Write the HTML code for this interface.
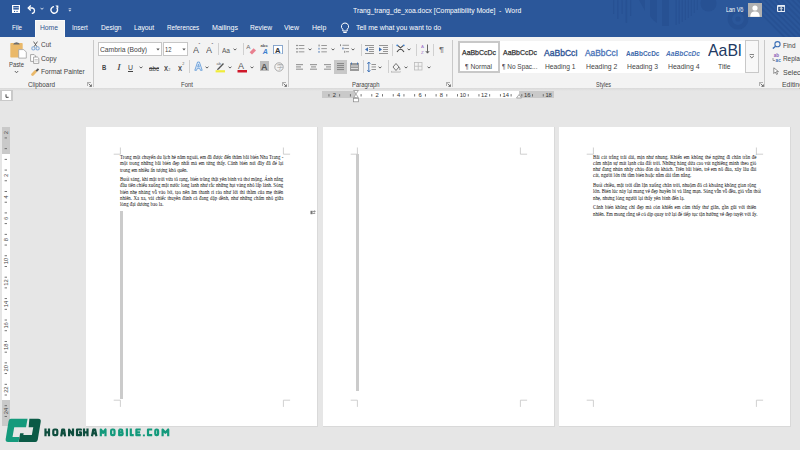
<!DOCTYPE html>
<html><head><meta charset="utf-8"><style>
html,body{margin:0;padding:0;}
body{width:800px;height:450px;overflow:hidden;position:relative;background:#e6e6e6;font-family:"Liberation Sans",sans-serif;}
.r{position:absolute;display:block;}
.t{position:absolute;white-space:pre;line-height:1;transform-origin:0 50%;}
.dl{position:absolute;font-family:"Liberation Serif",serif;font-size:5.2px;line-height:1;color:#161616;text-align:justify;text-align-last:justify;white-space:nowrap;transform-origin:0 0;transform:scaleX(0.93);-webkit-text-stroke:0.03px #161616;}
</style></head><body>
<div class="r" style="left:0.00px;top:0.00px;width:800.00px;height:37.00px;background:#2b579a;"></div><div class="r" style="left:0.00px;top:37.00px;width:800.00px;height:51.00px;background:#f3f3f3;"></div><div class="r" style="left:0.00px;top:88.00px;width:800.00px;height:362.00px;background:#e6e6e6;"></div><div class="r" style="left:0.00px;top:88.00px;width:800.00px;height:2.50px;background:linear-gradient(#d9d9d9,#e6e6e6);"></div><svg class="r" style="left:600.00px;top:0.00px" width="200" height="37" viewBox="0 0 200 37"><rect x="13" y="0" width="1.3" height="14" rx="0.6" fill="#275193"/><rect x="17.2" y="0" width="1.3" height="19" rx="0.6" fill="#275193"/><rect x="21.5" y="0" width="1.2" height="14" rx="0.6" fill="#275193"/><rect x="25.6" y="0" width="1.5" height="23" rx="0.6" fill="#275193"/><rect x="30" y="0" width="1.3" height="16" rx="0.6" fill="#275193"/><rect x="75.5" y="0" width="1.3" height="25" rx="0.6" fill="#275193"/><rect x="78.6" y="0" width="1.3" height="24" rx="0.6" fill="#275193"/><rect x="81.7" y="0" width="1.2" height="22" rx="0.6" fill="#275193"/><rect x="84.8" y="0" width="1.2" height="20" rx="0.6" fill="#275193"/><rect x="87.8" y="0" width="1.1" height="18" rx="0.6" fill="#275193"/><rect x="90.8" y="0" width="1" height="16" rx="0.6" fill="#275193"/><rect x="93.8" y="0" width="1" height="13" rx="0.6" fill="#275193"/><rect x="96.8" y="0" width="1" height="10" rx="0.6" fill="#275193"/><path d="M39 0 H45 L45 11 Z" fill="#275193"/><path d="M50 0 H57 V23 Q53 21 50 16 Z" fill="#275193"/><path d="M62 0 H69 V26 H62 Z" fill="#275193"/><circle cx="108.5" cy="3.5" r="8" fill="#275193"/><circle cx="138" cy="19" r="8.2" fill="none" stroke="#275193" stroke-width="4.5"/><circle cx="138" cy="19" r="2.6" fill="#275193"/><clipPath id="stc"><path d="M157 0 H200 V37 H170 Z"/></clipPath><g clip-path="url(#stc)"><path d="M146.2 0 L148.6 0 L185.6 37 L183.2 37 Z" fill="#275193"/><path d="M151.8 0 L154.2 0 L191.2 37 L188.8 37 Z" fill="#275193"/><path d="M157.4 0 L159.8 0 L196.8 37 L194.4 37 Z" fill="#275193"/><path d="M163 0 L165.4 0 L202.4 37 L200 37 Z" fill="#275193"/><path d="M168.6 0 L171 0 L208 37 L205.6 37 Z" fill="#275193"/><path d="M174.2 0 L176.6 0 L213.6 37 L211.2 37 Z" fill="#275193"/><path d="M179.8 0 L182.2 0 L219.2 37 L216.8 37 Z" fill="#275193"/><path d="M185.4 0 L187.8 0 L224.8 37 L222.4 37 Z" fill="#275193"/><path d="M191 0 L193.4 0 L230.4 37 L228 37 Z" fill="#275193"/><path d="M196.6 0 L199 0 L236 37 L233.6 37 Z" fill="#275193"/><path d="M202.2 0 L204.6 0 L241.6 37 L239.2 37 Z" fill="#275193"/></g></svg><div class="t" style="left:352.50px;top:7.60px;font-size:6.80px;color:#fff;font-family:'Liberation Sans', sans-serif;font-weight:normal;font-style:normal;transform:scaleX(0.9981);">Trang_trang_de_xoa.docx [Compatibility Mode]  -  Word</div><div class="t" style="left:725.60px;top:5.79px;font-size:7.00px;color:#fff;font-family:'Liberation Sans', sans-serif;font-weight:normal;font-style:normal;transform:scaleX(0.7843);">Lan Võ</div><div class="r" style="left:748.00px;top:2.50px;width:14.00px;height:14.00px;background:#b1b1b1;"></div><svg class="r" style="left:748.00px;top:2.50px" width="14" height="14" viewBox="0 0 14 14"><circle cx="7" cy="5" r="2.6" fill="#fff"/><path d="M2.3 13.7 C2.3 9.5 4.5 8.4 7 8.4 C9.5 8.4 11.7 9.5 11.7 13.7 Z" fill="#fff"/></svg><svg class="r" style="left:776.90px;top:4.90px" width="8.4" height="7.1" viewBox="0 0 8.4 7.1"><rect x="0.6" y="0.6" width="7.2" height="5.9" rx="0.8" fill="#2b4f86" stroke="#e8eef7" stroke-width="1.2"/><rect x="0.6" y="0.6" width="7.2" height="1.2" fill="#e8eef7"/><path d="M4.2 6 V2.6 M2.9 3.8 L4.2 2.5 L5.5 3.8" stroke="#fff" stroke-width="0.9" fill="none"/></svg><svg class="r" style="left:12.00px;top:5.00px" width="8" height="8" viewBox="0 0 8 8"><rect x="0" y="0" width="8" height="8" fill="#fff"/><rect x="1.3" y="1" width="5.5" height="3.6" fill="#2b579a"/><rect x="1.3" y="2.5" width="5.5" height="0.6" fill="#fff"/><rect x="2" y="5.9" width="1.1" height="1.1" fill="#2b579a"/><rect x="4.5" y="5.9" width="1.1" height="1.1" fill="#2b579a"/></svg><svg class="r" style="left:27.00px;top:5.00px" width="10" height="9" viewBox="0 0 10 9"><path d="M2.2 3 H5.5 A2.8 2.8 0 0 1 5.5 8.4 H4.8" fill="none" stroke="#fff" stroke-width="1.3"/><path d="M3.8 0.6 L1.2 3 L3.8 5.4" fill="none" stroke="#fff" stroke-width="1.3"/></svg><svg class="r" style="left:39.50px;top:7.00px" width="4" height="3.5" viewBox="0 0 4 3.5"><path d="M0.6 0.8 L2 2.4 L3.4 0.8" fill="none" stroke="#fff" stroke-width="0.8"/></svg><svg class="r" style="left:49.50px;top:4.50px" width="9" height="9" viewBox="0 0 9 9"><path d="M6.6 2.6 A3.3 3.3 0 1 1 4 1.6" fill="none" stroke="#fff" stroke-width="1.4"/><path d="M5.3 0.6 L8.3 0.6 L8.3 3.6 Z" fill="#fff"/></svg><svg class="r" style="left:67.50px;top:7.50px" width="4" height="4" viewBox="0 0 4 4"><rect x="0.6" y="0.5" width="2.6" height="0.7" fill="#fff"/><path d="M0.5 2.2 H3.3 L1.9 3.6 Z" fill="#fff"/></svg><div class="r" style="left:34.50px;top:19.50px;width:30.50px;height:17.50px;background:#f3f3f3;box-shadow:inset 1px 1px 0 #fbfbfb,inset -1px 0 0 #fbfbfb;"></div><div class="t" style="left:11.50px;top:25.40px;font-size:6.80px;color:#fff;font-family:'Liberation Sans', sans-serif;font-weight:normal;font-style:normal;transform:scaleX(0.9126);">File</div><div class="t" style="left:40.00px;top:25.40px;font-size:6.80px;color:#34568f;font-family:'Liberation Sans', sans-serif;font-weight:normal;font-style:normal;transform:scaleX(0.9923);">Home</div><div class="t" style="left:71.75px;top:25.40px;font-size:6.80px;color:#fff;font-family:'Liberation Sans', sans-serif;font-weight:normal;font-style:normal;transform:scaleX(0.9261);">Insert</div><div class="t" style="left:100.50px;top:25.40px;font-size:6.80px;color:#fff;font-family:'Liberation Sans', sans-serif;font-weight:normal;font-style:normal;transform:scaleX(0.9685);">Design</div><div class="t" style="left:133.75px;top:25.40px;font-size:6.80px;color:#fff;font-family:'Liberation Sans', sans-serif;font-weight:normal;font-style:normal;transform:scaleX(0.9918);">Layout</div><div class="t" style="left:166.75px;top:25.40px;font-size:6.80px;color:#fff;font-family:'Liberation Sans', sans-serif;font-weight:normal;font-style:normal;transform:scaleX(0.9274);">References</div><div class="t" style="left:212.00px;top:25.40px;font-size:6.80px;color:#fff;font-family:'Liberation Sans', sans-serif;font-weight:normal;font-style:normal;transform:scaleX(1.0424);">Mailings</div><div class="t" style="left:250.00px;top:25.40px;font-size:6.80px;color:#fff;font-family:'Liberation Sans', sans-serif;font-weight:normal;font-style:normal;transform:scaleX(0.9867);">Review</div><div class="t" style="left:284.00px;top:25.40px;font-size:6.80px;color:#fff;font-family:'Liberation Sans', sans-serif;font-weight:normal;font-style:normal;transform:scaleX(1.0263);">View</div><div class="t" style="left:311.75px;top:25.40px;font-size:6.80px;color:#fff;font-family:'Liberation Sans', sans-serif;font-weight:normal;font-style:normal;transform:scaleX(1.0189);">Help</div><svg class="r" style="left:340.00px;top:22.00px" width="10" height="12" viewBox="0 0 10 12"><path d="M5 1 A3.5 3.5 0 0 0 2.8 7.3 V9 H7.2 V7.3 A3.5 3.5 0 0 0 5 1 Z" fill="none" stroke="#fff" stroke-width="1"/><path d="M3.3 10.5 H6.7" stroke="#fff" stroke-width="1"/></svg><div class="t" style="left:356.00px;top:25.40px;font-size:6.80px;color:#fff;font-family:'Liberation Sans', sans-serif;font-weight:normal;font-style:normal;transform:scaleX(1.0160);">Tell me what you want to do</div><div class="r" style="left:92.80px;top:39.50px;width:0.90px;height:47.00px;background:#c9c9c9;"></div><div class="r" style="left:287.80px;top:39.50px;width:0.90px;height:47.00px;background:#c9c9c9;"></div><div class="r" style="left:451.80px;top:39.50px;width:0.90px;height:47.00px;background:#c9c9c9;"></div><div class="r" style="left:764.30px;top:39.50px;width:0.90px;height:47.00px;background:#c9c9c9;"></div><svg class="r" style="left:9.50px;top:40.50px" width="17" height="18" viewBox="0 0 17 18"><rect x="0.3" y="1.9" width="12.4" height="14.7" rx="0.8" fill="#eab96a"/><path d="M3.2 3.6 Q3.5 1.4 6.5 1.2 Q9.5 1.4 9.8 3.6 Z" fill="#6e6e6e"/><path d="M8.7 8.6 H13.8 L16.3 11.1 V17.1 H8.7 Z" fill="#fff" stroke="#a0a0a0" stroke-width="0.8"/></svg><div class="t" style="left:9.00px;top:60.68px;font-size:7.40px;color:#444;font-family:'Liberation Sans', sans-serif;font-weight:normal;font-style:normal;transform:scaleX(0.7927);">Paste</div><svg class="r" style="left:14.00px;top:70.00px" width="5" height="4" viewBox="0 0 5 4"><path d="M0.8 1 L2.5 2.8 L4.2 1" fill="none" stroke="#555" stroke-width="0.9"/></svg><svg class="r" style="left:30.50px;top:40.50px" width="9" height="10" viewBox="0 0 9 10"><path d="M2.6 0.6 L6 5.8 M6.4 0.6 L3 5.8" stroke="#555" stroke-width="0.9"/><circle cx="2.4" cy="7.4" r="1.6" fill="none" stroke="#86acd8" stroke-width="1.1"/><circle cx="6.6" cy="7.4" r="1.6" fill="none" stroke="#86acd8" stroke-width="1.1"/></svg><div class="t" style="left:40.60px;top:41.18px;font-size:7.40px;color:#444;font-family:'Liberation Sans', sans-serif;font-weight:normal;font-style:normal;transform:scaleX(0.8684);">Cut</div><svg class="r" style="left:29.80px;top:53.50px" width="10" height="10" viewBox="0 0 10 10"><path d="M0.6 0.6 H4.2 L5.6 2 V7.4 H0.6 Z" fill="#fff" stroke="#8c8c8c" stroke-width="0.75"/><path d="M3.6 3 H7.4 L8.8 4.4 V9.4 H3.6 Z" fill="#fff" stroke="#8c8c8c" stroke-width="0.75"/><path d="M4.6 5.5 H7.8 M4.6 7 H7.8" stroke="#aaa" stroke-width="0.6"/></svg><div class="t" style="left:40.60px;top:55.28px;font-size:7.40px;color:#444;font-family:'Liberation Sans', sans-serif;font-weight:normal;font-style:normal;transform:scaleX(0.9059);">Copy</div><svg class="r" style="left:31.00px;top:66.50px" width="9" height="9" viewBox="0 0 9 9"><path d="M1.6 7.4 L4.4 4.6" stroke="#eab96a" stroke-width="2.8" stroke-linecap="round"/><path d="M4.6 3.4 L6.8 1.2 L8.2 2.6 L6 4.8 Z" fill="#555"/></svg><div class="t" style="left:40.60px;top:67.98px;font-size:7.40px;color:#444;font-family:'Liberation Sans', sans-serif;font-weight:normal;font-style:normal;transform:scaleX(0.8950);">Format Painter</div><div class="t" style="left:28.00px;top:81.60px;font-size:6.80px;color:#444;font-family:'Liberation Sans', sans-serif;font-weight:normal;font-style:normal;transform:scaleX(0.9276);">Clipboard</div><svg class="r" style="left:87.30px;top:82.40px" width="5" height="5" viewBox="0 0 5 5"><path d="M0.4 0.4 H4 M0.4 0.4 V4" stroke="#888" stroke-width="0.7" fill="none"/><path d="M1.6 1.6 L4.4 4.4 M4.4 2.4 V4.4 H2.4" stroke="#555" stroke-width="0.8" fill="none"/></svg><div class="r" style="left:98.00px;top:42.30px;width:63.60px;height:13.30px;background:#fff;box-shadow:inset 0 0 0 1px #c6c6c6;"></div><div class="r" style="left:163.00px;top:42.30px;width:24.75px;height:13.30px;background:#fff;box-shadow:inset 0 0 0 1px #c6c6c6;"></div><div class="t" style="left:99.75px;top:46.08px;font-size:7.40px;color:#444;font-family:'Liberation Sans', sans-serif;font-weight:normal;font-style:normal;transform:scaleX(0.9100);">Cambria (Body)</div><div class="t" style="left:165.00px;top:46.08px;font-size:7.40px;color:#444;font-family:'Liberation Sans', sans-serif;font-weight:normal;font-style:normal;transform:scaleX(0.7897);">12</div><svg class="r" style="left:156.00px;top:48.00px" width="4" height="3" viewBox="0 0 4 3"><path d="M0.3 0.5 L2 2.5 L3.7 0.5 Z" fill="#555"/></svg><svg class="r" style="left:181.75px;top:48.00px" width="4" height="3" viewBox="0 0 4 3"><path d="M0.3 0.5 L2 2.5 L3.7 0.5 Z" fill="#555"/></svg><div class="t" style="left:193.00px;top:45.99px;font-size:8.50px;color:#555;font-family:'Liberation Sans', sans-serif;font-weight:normal;font-style:normal;transform:scaleX(1.0583);">A</div><div class="t" style="left:198.50px;top:42.85px;font-size:5.00px;color:#555;font-family:'Liberation Sans', sans-serif;font-weight:normal;font-style:normal;">ˆ</div><div class="t" style="left:206.00px;top:45.99px;font-size:8.50px;color:#555;font-family:'Liberation Sans', sans-serif;font-weight:normal;font-style:normal;transform:scaleX(1.0583);">A</div><div class="t" style="left:211.50px;top:42.85px;font-size:5.00px;color:#555;font-family:'Liberation Sans', sans-serif;font-weight:normal;font-style:normal;">ˇ</div><div class="r" style="left:217.75px;top:43.00px;width:0.80px;height:12.00px;background:#d0d0d0;"></div><div class="t" style="left:222.00px;top:46.79px;font-size:7.00px;color:#555;font-family:'Liberation Sans', sans-serif;font-weight:normal;font-style:normal;transform:scaleX(0.9344);">Aa</div><svg class="r" style="left:233.00px;top:47.50px" width="4" height="3" viewBox="0 0 4 3"><path d="M0.5 0.6 L2 2.1 L3.5 0.6" fill="none" stroke="#555" stroke-width="0.95"/></svg><div class="r" style="left:242.50px;top:43.00px;width:0.80px;height:12.00px;background:#d0d0d0;"></div><svg class="r" style="left:246.00px;top:43.00px" width="11" height="12" viewBox="0 0 11 12"><text x="0.3" y="6.3" font-size="6.2" fill="#666" font-family="Liberation Sans">A</text><path d="M3.6 9.2 L7.6 5.2 L10 7.6 L6 11.6 Z" fill="#e8808f"/></svg><svg class="r" style="left:260.00px;top:43.00px" width="9" height="12" viewBox="0 0 9 12"><text x="0.5" y="4.3" font-size="4.2" fill="#555" font-family="Liberation Sans" font-weight="bold">abc</text><text x="2.8" y="11" font-size="7" fill="#3b7fcf" font-family="Liberation Sans" font-style="italic" font-weight="bold">A</text></svg><svg class="r" style="left:273.00px;top:44.50px" width="10" height="9.5" viewBox="0 0 10 9.5"><rect x="0.5" y="0.5" width="9" height="8.5" fill="#fff" stroke="#7f9fc8" stroke-width="0.9"/><text x="1.9" y="7.6" font-size="7.6" fill="#333" font-family="Liberation Sans" font-weight="bold">A</text></svg><div class="t" style="left:102.00px;top:64.38px;font-size:7.40px;color:#444;font-family:'Liberation Sans', sans-serif;font-weight:bold;font-style:normal;transform:scaleX(0.8046);">B</div><div class="t" style="left:116.80px;top:64.27px;font-size:7.60px;color:#444;font-family:'Liberation Serif', serif;font-weight:normal;font-style:italic;transform:scaleX(1.5014);">I</div><div class="t" style="left:128.00px;top:63.98px;font-size:7.20px;color:#444;font-family:'Liberation Sans', sans-serif;font-weight:normal;font-style:normal;transform:scaleX(0.9616);">U</div><div class="r" style="left:128.20px;top:70.60px;width:4.80px;height:0.80px;background:#444;"></div><svg class="r" style="left:139.00px;top:65.50px" width="4" height="3" viewBox="0 0 4 3"><path d="M0.5 0.6 L2 2.1 L3.5 0.6" fill="none" stroke="#555" stroke-width="0.95"/></svg><div class="t" style="left:149.00px;top:64.59px;font-size:7.00px;color:#444;font-family:'Liberation Sans', sans-serif;font-weight:normal;font-style:normal;transform:scaleX(0.8860);">abc</div><div class="r" style="left:149.00px;top:67.60px;width:10.00px;height:0.70px;background:#444;"></div><div class="t" style="left:164.00px;top:64.79px;font-size:7.00px;color:#444;font-family:'Liberation Sans', sans-serif;font-weight:bold;font-style:normal;transform:scaleX(0.8567);">X</div><div class="t" style="left:168.30px;top:68.79px;font-size:3.80px;color:#666;font-family:'Liberation Sans', sans-serif;font-weight:normal;font-style:normal;">2</div><div class="t" style="left:178.00px;top:64.79px;font-size:7.00px;color:#444;font-family:'Liberation Sans', sans-serif;font-weight:bold;font-style:normal;transform:scaleX(0.8567);">X</div><div class="t" style="left:182.30px;top:63.29px;font-size:3.80px;color:#666;font-family:'Liberation Sans', sans-serif;font-weight:normal;font-style:normal;">2</div><div class="r" style="left:189.40px;top:60.00px;width:0.80px;height:13.00px;background:#d0d0d0;"></div><svg class="r" style="left:193.50px;top:61.00px" width="9" height="10" viewBox="0 0 9 10"><path d="M0.8 9.3 L3.6 1 H5.4 L8.2 9.3 H6.4 L5.8 7.3 H3.2 L2.6 9.3 Z M3.7 5.8 H5.3 L4.5 3.3 Z" fill="#e3edf9" stroke="#5b95d6" stroke-width="0.8" stroke-linejoin="round"/></svg><svg class="r" style="left:205.00px;top:65.50px" width="4" height="3" viewBox="0 0 4 3"><path d="M0.5 0.6 L2 2.1 L3.5 0.6" fill="none" stroke="#555" stroke-width="0.95"/></svg><svg class="r" style="left:215.00px;top:60.00px" width="11" height="13" viewBox="0 0 11 13"><text x="1.5" y="4.5" font-size="4" fill="#666" font-family="Liberation Sans">ab</text><path d="M3 9.3 L8.5 3.5" stroke="#555" stroke-width="1.3"/><path d="M2.2 10 L3.2 8.6" stroke="#555" stroke-width="0.8"/><rect x="0.6" y="10.2" width="9.4" height="2.2" fill="#f0ec3a"/></svg><svg class="r" style="left:228.00px;top:65.50px" width="4" height="3" viewBox="0 0 4 3"><path d="M0.5 0.6 L2 2.1 L3.5 0.6" fill="none" stroke="#555" stroke-width="0.95"/></svg><svg class="r" style="left:237.00px;top:60.00px" width="11" height="13" viewBox="0 0 11 13"><text x="1" y="9" font-size="9" fill="#555" font-family="Liberation Sans">A</text><rect x="0.5" y="10" width="9.5" height="2.5" fill="#d0182a"/></svg><svg class="r" style="left:250.00px;top:65.50px" width="4" height="3" viewBox="0 0 4 3"><path d="M0.5 0.6 L2 2.1 L3.5 0.6" fill="none" stroke="#555" stroke-width="0.95"/></svg><svg class="r" style="left:259.50px;top:61.00px" width="9" height="10" viewBox="0 0 9 10"><rect x="0" y="0" width="9" height="10" fill="#bdbdbd"/><text x="1" y="8.7" font-size="9" fill="#555" font-family="Liberation Sans" font-weight="bold">A</text></svg><svg class="r" style="left:273.50px;top:62.00px" width="10" height="10" viewBox="0 0 10 10"><circle cx="5" cy="5" r="4.2" fill="none" stroke="#999" stroke-width="0.8"/><text x="2.6" y="7.3" font-size="6" fill="#999" font-family="Liberation Sans">字</text></svg><div class="t" style="left:180.60px;top:81.60px;font-size:6.80px;color:#444;font-family:'Liberation Sans', sans-serif;font-weight:normal;font-style:normal;transform:scaleX(0.8746);">Font</div><svg class="r" style="left:281.80px;top:82.40px" width="5" height="5" viewBox="0 0 5 5"><path d="M0.4 0.4 H4 M0.4 0.4 V4" stroke="#888" stroke-width="0.7" fill="none"/><path d="M1.6 1.6 L4.4 4.4 M4.4 2.4 V4.4 H2.4" stroke="#555" stroke-width="0.8" fill="none"/></svg><svg class="r" style="left:295.50px;top:44.00px" width="10" height="9" viewBox="0 0 10 9"><rect x="0.4" y="0.9" width="1.2" height="1.2" fill="#555"/><rect x="0.4" y="4.1" width="1.2" height="1.2" fill="#555"/><rect x="0.4" y="7.3" width="1.2" height="1.2" fill="#555"/><rect x="2.75" y="1" width="5.6" height="0.9" fill="#8f8f8f"/><rect x="2.75" y="4.2" width="5.6" height="0.9" fill="#8f8f8f"/><rect x="2.75" y="7.4" width="5.6" height="0.9" fill="#8f8f8f"/></svg><svg class="r" style="left:308.00px;top:47.50px" width="4" height="3" viewBox="0 0 4 3"><path d="M0.5 0.6 L2 2.1 L3.5 0.6" fill="none" stroke="#555" stroke-width="0.95"/></svg><svg class="r" style="left:317.50px;top:44.00px" width="10" height="9" viewBox="0 0 10 9"><rect x="0.6" y="0.6" width="0.9" height="1.8" fill="#666"/><rect x="0.4" y="3.8" width="1.2" height="1.8" fill="#6b8fc0"/><rect x="0.4" y="7" width="1.2" height="1.8" fill="#6b8fc0"/><rect x="3.3" y="1" width="5.6" height="0.9" fill="#8f8f8f"/><rect x="3.3" y="4.2" width="5.6" height="0.9" fill="#8f8f8f"/><rect x="3.3" y="7.4" width="5.6" height="0.9" fill="#8f8f8f"/></svg><svg class="r" style="left:330.50px;top:47.50px" width="4" height="3" viewBox="0 0 4 3"><path d="M0.5 0.6 L2 2.1 L3.5 0.6" fill="none" stroke="#555" stroke-width="0.95"/></svg><svg class="r" style="left:340.00px;top:44.00px" width="10" height="9.5" viewBox="0 0 10 9.5"><rect x="0" y="0.3" width="1" height="1.8" fill="#888"/><rect x="2.3" y="3.5" width="1.3" height="1.8" fill="#5a7fb5"/><rect x="4.3" y="6.8" width="0.9" height="2" fill="#777"/><rect x="2.5" y="0.8" width="6.5" height="0.9" fill="#8f8f8f"/><rect x="4.3" y="4" width="4.7" height="0.9" fill="#8f8f8f"/><rect x="6" y="7.3" width="3" height="0.9" fill="#8f8f8f"/></svg><svg class="r" style="left:351.00px;top:47.50px" width="4" height="3" viewBox="0 0 4 3"><path d="M0.5 0.6 L2 2.1 L3.5 0.6" fill="none" stroke="#555" stroke-width="0.95"/></svg><div class="r" style="left:360.60px;top:43.50px;width:0.80px;height:12.00px;background:#d0d0d0;"></div><svg class="r" style="left:365.00px;top:44.50px" width="9" height="9" viewBox="0 0 9 9"><rect x="0" y="0" width="9" height="0.9" fill="#8a8a8a"/><rect x="4" y="2" width="5" height="0.9" fill="#8a8a8a"/><rect x="4" y="4" width="5" height="0.9" fill="#8a8a8a"/><rect x="4" y="6" width="5" height="0.9" fill="#8a8a8a"/><rect x="0" y="8" width="9" height="0.9" fill="#8a8a8a"/><path d="M0 4.4 L3 2.3 V6.5 Z" fill="#3b6fb6"/></svg><svg class="r" style="left:378.50px;top:44.50px" width="9" height="9" viewBox="0 0 9 9"><rect x="0" y="0" width="9" height="0.9" fill="#8a8a8a"/><rect x="4" y="2" width="5" height="0.9" fill="#8a8a8a"/><rect x="4" y="4" width="5" height="0.9" fill="#8a8a8a"/><rect x="4" y="6" width="5" height="0.9" fill="#8a8a8a"/><rect x="0" y="8" width="9" height="0.9" fill="#8a8a8a"/><path d="M3 4.4 L0 2.3 V6.5 Z" fill="#3b6fb6"/></svg><div class="r" style="left:391.50px;top:43.50px;width:0.80px;height:12.00px;background:#d0d0d0;"></div><svg class="r" style="left:395.50px;top:44.00px" width="9" height="9" viewBox="0 0 9 9"><path d="M1 8 Q4.5 2.5 8 8" fill="none" stroke="#444" stroke-width="1.1"/><path d="M1.5 1.3 L4.5 3.8 L7.5 1.3" fill="none" stroke="#444" stroke-width="1.1"/><circle cx="1.2" cy="1.3" r="0.9" fill="#3b7fcf"/><circle cx="7.8" cy="1.3" r="0.9" fill="#3b7fcf"/></svg><svg class="r" style="left:407.00px;top:47.50px" width="4" height="3" viewBox="0 0 4 3"><path d="M0.5 0.6 L2 2.1 L3.5 0.6" fill="none" stroke="#555" stroke-width="0.95"/></svg><div class="r" style="left:416.00px;top:43.50px;width:0.80px;height:12.00px;background:#d0d0d0;"></div><svg class="r" style="left:420.50px;top:43.50px" width="9" height="10" viewBox="0 0 9 10"><text x="0" y="4.3" font-size="4.4" fill="#9b6fc8" font-family="Liberation Sans">A</text><text x="0" y="9.5" font-size="4.4" fill="#9b6fc8" font-family="Liberation Sans">Z</text><path d="M6.5 0.5 V9" stroke="#555" stroke-width="0.9"/><path d="M4.8 7 L6.5 9.2 L8.2 7" fill="none" stroke="#555" stroke-width="0.9"/></svg><div class="r" style="left:433.00px;top:43.50px;width:0.80px;height:12.00px;background:#d0d0d0;"></div><div class="t" style="left:438.75px;top:45.96px;font-size:8.00px;color:#666;font-family:'Liberation Sans', sans-serif;font-weight:normal;font-style:normal;transform:scaleX(1.1636);">¶</div><svg class="r" style="left:296.00px;top:64.00px" width="7" height="7" viewBox="0 0 7 7"><rect x="0" y="0" width="7" height="1.2" fill="#9c9c9c"/><rect x="0" y="2.3" width="5" height="1.2" fill="#9c9c9c"/><rect x="0" y="4.6" width="7" height="1.2" fill="#9c9c9c"/></svg><svg class="r" style="left:309.80px;top:64.00px" width="7" height="7" viewBox="0 0 7 7"><rect x="0" y="0" width="7" height="1.2" fill="#9c9c9c"/><rect x="1" y="2.3" width="5" height="1.2" fill="#9c9c9c"/><rect x="0" y="4.6" width="7" height="1.2" fill="#9c9c9c"/></svg><svg class="r" style="left:323.70px;top:64.00px" width="7" height="7" viewBox="0 0 7 7"><rect x="0" y="0" width="7" height="1.2" fill="#9c9c9c"/><rect x="2" y="2.3" width="5" height="1.2" fill="#9c9c9c"/><rect x="0" y="4.6" width="7" height="1.2" fill="#9c9c9c"/></svg><div class="r" style="left:334.00px;top:59.80px;width:13.00px;height:14.00px;background:#c8c8c8;"></div><svg class="r" style="left:337.00px;top:63.00px" width="7" height="8" viewBox="0 0 7 8"><rect x="0" y="0" width="7" height="1.1" fill="#8a8a8a"/><rect x="0" y="2" width="7" height="1.1" fill="#8a8a8a"/><rect x="0" y="4" width="7" height="1.1" fill="#8a8a8a"/><rect x="0" y="6" width="7" height="1.1" fill="#8a8a8a"/></svg><svg class="r" style="left:350.00px;top:62.00px" width="9" height="10" viewBox="0 0 9 10"><rect x="0" y="1" width="9" height="8" fill="#9a9a9a"/><rect x="1" y="3.5" width="7" height="1" fill="#ddd"/><rect x="1" y="6" width="7" height="1" fill="#ddd"/><path d="M1.5 0.5 V2.5 M7.5 0.5 V2.5" stroke="#3b6fb6" stroke-width="0.9"/></svg><div class="r" style="left:362.50px;top:60.00px;width:0.80px;height:13.00px;background:#d0d0d0;"></div><svg class="r" style="left:366.50px;top:60.50px" width="9" height="12" viewBox="0 0 9 12"><path d="M1.8 1 V11" stroke="#3b6fb6" stroke-width="0.9"/><path d="M0.3 2.8 L1.8 1 L3.3 2.8 M0.3 9.2 L1.8 11 L3.3 9.2" fill="none" stroke="#3b6fb6" stroke-width="0.9"/><rect x="4.5" y="3" width="4.5" height="0.9" fill="#888"/><rect x="4.5" y="5.5" width="4.5" height="0.9" fill="#888"/><rect x="4.5" y="8" width="4.5" height="0.9" fill="#888"/></svg><svg class="r" style="left:378.00px;top:65.50px" width="4" height="3" viewBox="0 0 4 3"><path d="M0.5 0.6 L2 2.1 L3.5 0.6" fill="none" stroke="#555" stroke-width="0.95"/></svg><div class="r" style="left:387.50px;top:60.00px;width:0.80px;height:13.00px;background:#d0d0d0;"></div><svg class="r" style="left:391.00px;top:61.00px" width="10" height="12" viewBox="0 0 10 12"><path d="M2 6 L5 2.5 L8 6 L5 9.5 Z" fill="none" stroke="#666" stroke-width="0.9"/><path d="M8 6 Q9.5 8 8.8 9" fill="none" stroke="#666" stroke-width="0.8"/><rect x="0.5" y="10.2" width="9" height="1.5" fill="#fff" stroke="#aaa" stroke-width="0.5"/></svg><svg class="r" style="left:404.00px;top:65.50px" width="4" height="3" viewBox="0 0 4 3"><path d="M0.5 0.6 L2 2.1 L3.5 0.6" fill="none" stroke="#555" stroke-width="0.95"/></svg><svg class="r" style="left:414.00px;top:62.00px" width="8.5" height="8.5" viewBox="0 0 8.5 8.5"><rect x="0.5" y="0.5" width="7.5" height="7.5" fill="none" stroke="#bbb" stroke-width="0.8"/><path d="M4.25 0.5 V8 M0.5 4.25 H8" stroke="#bbb" stroke-width="0.8"/></svg><svg class="r" style="left:427.00px;top:65.50px" width="4" height="3" viewBox="0 0 4 3"><path d="M0.5 0.6 L2 2.1 L3.5 0.6" fill="none" stroke="#555" stroke-width="0.95"/></svg><div class="t" style="left:352.00px;top:81.60px;font-size:6.80px;color:#444;font-family:'Liberation Sans', sans-serif;font-weight:normal;font-style:normal;transform:scaleX(0.8660);">Paragraph</div><svg class="r" style="left:446.30px;top:82.40px" width="5" height="5" viewBox="0 0 5 5"><path d="M0.4 0.4 H4 M0.4 0.4 V4" stroke="#888" stroke-width="0.7" fill="none"/><path d="M1.6 1.6 L4.4 4.4 M4.4 2.4 V4.4 H2.4" stroke="#555" stroke-width="0.8" fill="none"/></svg><div class="r" style="left:458.00px;top:41.00px;width:287.00px;height:32.00px;background:#fff;"></div><div class="r" style="left:458.00px;top:41.00px;width:41.50px;height:32.00px;background:none;box-shadow:inset 0 0 0 2px #c8c8c8;"></div><div class="t" style="left:462.00px;top:49.48px;font-size:7.40px;color:#333;font-family:'Liberation Sans', sans-serif;font-weight:normal;font-style:normal;transform:scaleX(0.9395);-webkit-text-stroke:0.25px #333;">AaBbCcDc</div><div class="t" style="left:465.00px;top:63.50px;font-size:6.60px;color:#444;font-family:'Liberation Sans', sans-serif;font-weight:normal;font-style:normal;transform:scaleX(1.0132);">¶ Normal</div><div class="t" style="left:503.00px;top:49.48px;font-size:7.40px;color:#333;font-family:'Liberation Sans', sans-serif;font-weight:normal;font-style:normal;transform:scaleX(0.9395);-webkit-text-stroke:0.25px #333;">AaBbCcDc</div><div class="t" style="left:502.00px;top:63.50px;font-size:6.60px;color:#444;font-family:'Liberation Sans', sans-serif;font-weight:normal;font-style:normal;transform:scaleX(0.9808);">¶ No Spac...</div><div class="t" style="left:543.75px;top:48.62px;font-size:9.20px;color:#2f5597;font-family:'Liberation Sans', sans-serif;font-weight:normal;font-style:normal;transform:scaleX(0.9296);-webkit-text-stroke:0.35px #2f5597;">AaBbCcI</div><div class="t" style="left:545.00px;top:63.50px;font-size:6.60px;color:#444;font-family:'Liberation Sans', sans-serif;font-weight:normal;font-style:normal;transform:scaleX(1.0169);">Heading 1</div><div class="t" style="left:585.00px;top:48.69px;font-size:8.70px;color:#4a73b8;font-family:'Liberation Sans', sans-serif;font-weight:normal;font-style:normal;transform:scaleX(0.9612);-webkit-text-stroke:0.3px #4a73b8;">AaBbCcI</div><div class="t" style="left:585.60px;top:63.50px;font-size:6.60px;color:#444;font-family:'Liberation Sans', sans-serif;font-weight:normal;font-style:normal;transform:scaleX(1.0435);">Heading 2</div><div class="t" style="left:625.60px;top:49.59px;font-size:7.00px;color:#4068aa;font-family:'Liberation Sans', sans-serif;font-weight:bold;font-style:normal;transform:scaleX(0.9233);">AaBbCcDc</div><div class="t" style="left:666.00px;top:49.59px;font-size:7.00px;color:#4a72b4;font-family:'Liberation Sans', sans-serif;font-weight:bold;font-style:italic;transform:scaleX(0.9398);">AaBbCcDc</div><div class="t" style="left:627.00px;top:63.50px;font-size:6.60px;color:#444;font-family:'Liberation Sans', sans-serif;font-weight:normal;font-style:normal;transform:scaleX(1.0302);">Heading 3</div><div class="t" style="left:667.50px;top:63.50px;font-size:6.60px;color:#444;font-family:'Liberation Sans', sans-serif;font-weight:normal;font-style:normal;transform:scaleX(1.0469);">Heading 4</div><div class="t" style="left:707.50px;top:43.40px;font-size:16.60px;color:#213963;font-family:'Liberation Sans', sans-serif;font-weight:normal;font-style:normal;transform:scaleX(0.9554);">AaBl</div><div class="t" style="left:718.00px;top:63.50px;font-size:6.60px;color:#444;font-family:'Liberation Sans', sans-serif;font-weight:normal;font-style:normal;transform:scaleX(1.0308);">Title</div><div class="r" style="left:745.00px;top:40.40px;width:13.75px;height:33.10px;background:#f8f8f8;box-shadow:inset 0 0 0 1px #c8c8c8;"></div><svg class="r" style="left:749.00px;top:54.00px" width="6" height="5" viewBox="0 0 6 5"><rect x="0.6" y="0.3" width="4.4" height="0.7" fill="#555"/><path d="M0.8 2 L2.8 3.9 L4.8 2" fill="none" stroke="#555" stroke-width="0.9"/></svg><div class="t" style="left:596.00px;top:81.60px;font-size:6.80px;color:#444;font-family:'Liberation Sans', sans-serif;font-weight:normal;font-style:normal;transform:scaleX(0.8100);">Styles</div><svg class="r" style="left:758.80px;top:82.40px" width="5" height="5" viewBox="0 0 5 5"><path d="M0.4 0.4 H4 M0.4 0.4 V4" stroke="#888" stroke-width="0.7" fill="none"/><path d="M1.6 1.6 L4.4 4.4 M4.4 2.4 V4.4 H2.4" stroke="#555" stroke-width="0.8" fill="none"/></svg><svg class="r" style="left:771.50px;top:41.00px" width="9" height="8" viewBox="0 0 9 8"><circle cx="5.5" cy="3.2" r="2.6" fill="none" stroke="#3b6fb6" stroke-width="1.1"/><path d="M3.6 5.2 L0.8 7.6" stroke="#3b6fb6" stroke-width="1.4"/></svg><div class="t" style="left:782.50px;top:42.08px;font-size:7.40px;color:#444;font-family:'Liberation Sans', sans-serif;font-weight:normal;font-style:normal;transform:scaleX(0.8683);">Find</div><svg class="r" style="left:771.50px;top:53.00px" width="10" height="10" viewBox="0 0 10 10"><text x="1.8" y="4.2" font-size="4.6" fill="#8b5fb8" font-family="Liberation Sans" font-weight="bold">ab</text><text x="3.6" y="9.2" font-size="4.6" fill="#3b6fb6" font-family="Liberation Sans" font-weight="bold">ac</text><path d="M1 5 V7.5 H3" fill="none" stroke="#777" stroke-width="0.7"/></svg><div class="t" style="left:782.50px;top:55.38px;font-size:7.40px;color:#444;font-family:'Liberation Sans', sans-serif;font-weight:normal;font-style:normal;transform:scaleX(0.8655);">Replace</div><svg class="r" style="left:773.00px;top:67.00px" width="7" height="8" viewBox="0 0 7 8"><path d="M0.8 0.8 V6.5 L2.3 5 L3.6 7.5 L4.6 7 L3.4 4.6 L5.5 4.6 Z" fill="#fff" stroke="#666" stroke-width="0.7"/></svg><div class="t" style="left:782.50px;top:68.58px;font-size:7.40px;color:#444;font-family:'Liberation Sans', sans-serif;font-weight:normal;font-style:normal;transform:scaleX(0.9481);">Select</div><div class="t" style="left:782.00px;top:81.60px;font-size:6.80px;color:#444;font-family:'Liberation Sans', sans-serif;font-weight:normal;font-style:normal;transform:scaleX(1.0100);">Editing</div><div class="r" style="left:0.00px;top:89.50px;width:12.80px;height:11.20px;background:#c9c9c9;"></div><div class="r" style="left:2.00px;top:91.00px;width:9.00px;height:8.50px;background:#fff;"></div><svg class="r" style="left:4.50px;top:94.00px" width="4" height="4.5" viewBox="0 0 4 4.5"><path d="M1 0.3 V3.3 H3.6" fill="none" stroke="#444" stroke-width="1"/></svg><div class="r" style="left:321.90px;top:90.70px;width:231.70px;height:7.30px;background:#fff;"></div><div class="r" style="left:321.90px;top:90.70px;width:33.70px;height:7.30px;background:#c9c9c9;"></div><div class="r" style="left:519.00px;top:90.70px;width:34.60px;height:7.30px;background:#c9c9c9;"></div><svg class="r" style="left:321.90px;top:90.70px" width="231.7" height="7.3" viewBox="0 0 231.7 7.3"><text x="12.26" y="6.3" font-size="5.8" fill="#333" text-anchor="middle" font-family="Liberation Sans">2</text><rect x="6.45" y="3.1" width="0.9" height="2.4" fill="#666"/><rect x="17.17" y="3.1" width="0.9" height="2.4" fill="#666"/><rect x="27.89" y="3.1" width="0.9" height="2.4" fill="#666"/><rect x="38.61" y="3.1" width="0.9" height="2.4" fill="#666"/><text x="55.14" y="6.3" font-size="5.8" fill="#333" text-anchor="middle" font-family="Liberation Sans">2</text><rect x="49.33" y="3.1" width="0.9" height="2.4" fill="#666"/><rect x="60.05" y="3.1" width="0.9" height="2.4" fill="#666"/><text x="76.58" y="6.3" font-size="5.8" fill="#333" text-anchor="middle" font-family="Liberation Sans">4</text><rect x="70.77" y="3.1" width="0.9" height="2.4" fill="#666"/><rect x="81.49" y="3.1" width="0.9" height="2.4" fill="#666"/><text x="98.02" y="6.3" font-size="5.8" fill="#333" text-anchor="middle" font-family="Liberation Sans">6</text><rect x="92.21" y="3.1" width="0.9" height="2.4" fill="#666"/><rect x="102.93" y="3.1" width="0.9" height="2.4" fill="#666"/><text x="119.46" y="6.3" font-size="5.8" fill="#333" text-anchor="middle" font-family="Liberation Sans">8</text><rect x="113.65" y="3.1" width="0.9" height="2.4" fill="#666"/><rect x="124.37" y="3.1" width="0.9" height="2.4" fill="#666"/><text x="140.9" y="6.3" font-size="5.8" fill="#333" text-anchor="middle" font-family="Liberation Sans">10</text><rect x="135.09" y="3.1" width="0.9" height="2.4" fill="#666"/><rect x="145.81" y="3.1" width="0.9" height="2.4" fill="#666"/><text x="162.34" y="6.3" font-size="5.8" fill="#333" text-anchor="middle" font-family="Liberation Sans">12</text><rect x="156.53" y="3.1" width="0.9" height="2.4" fill="#666"/><rect x="167.25" y="3.1" width="0.9" height="2.4" fill="#666"/><text x="183.78" y="6.3" font-size="5.8" fill="#333" text-anchor="middle" font-family="Liberation Sans">14</text><rect x="177.97" y="3.1" width="0.9" height="2.4" fill="#666"/><rect x="188.69" y="3.1" width="0.9" height="2.4" fill="#666"/><text x="205.22" y="6.3" font-size="5.8" fill="#333" text-anchor="middle" font-family="Liberation Sans">16</text><rect x="199.41" y="3.1" width="0.9" height="2.4" fill="#666"/><rect x="210.13" y="3.1" width="0.9" height="2.4" fill="#666"/><text x="226.66" y="6.3" font-size="5.8" fill="#333" text-anchor="middle" font-family="Liberation Sans">18</text><rect x="220.85" y="3.1" width="0.9" height="2.4" fill="#666"/></svg><svg class="r" style="left:353.00px;top:90.20px" width="6" height="12.5" viewBox="0 0 6 12.5"><path d="M0.6 0.5 H5.4 L3 3.9 Z M0.6 7.6 L3 4.1 L5.4 7.6 Z" fill="#fff" stroke="#8a8a8a" stroke-width="0.7"/><rect x="0.6" y="8.3" width="4.8" height="3.5" fill="#fff" stroke="#8a8a8a" stroke-width="0.7"/></svg><svg class="r" style="left:516.00px;top:94.00px" width="6" height="4.5" viewBox="0 0 6 4.5"><path d="M0.5 4 L3 0.6 L5.5 4 Z" fill="#fff" stroke="#8a8a8a" stroke-width="0.7"/></svg><div class="r" style="left:2.00px;top:126.50px;width:7.60px;height:299.50px;background:#fff;"></div><div class="r" style="left:2.00px;top:126.50px;width:7.60px;height:27.70px;background:#c9c9c9;"></div><div class="r" style="left:2.00px;top:399.60px;width:7.60px;height:26.40px;background:#c9c9c9;"></div><svg class="r" style="left:2.00px;top:126.50px" width="7.6" height="299.5" viewBox="0 0 7.6 299.5"><text transform="translate(5.9 5.46) rotate(-90)" font-size="5.8" fill="#444" text-anchor="middle" font-family="Liberation Sans">2</text><rect x="2.6" y="10.37" width="2.4" height="0.9" fill="#666"/><rect x="2.6" y="21.09" width="2.4" height="0.9" fill="#666"/><rect x="2.6" y="31.81" width="2.4" height="0.9" fill="#666"/><text transform="translate(5.9 48.34) rotate(-90)" font-size="5.8" fill="#444" text-anchor="middle" font-family="Liberation Sans">2</text><rect x="2.6" y="42.53" width="2.4" height="0.9" fill="#666"/><rect x="2.6" y="53.25" width="2.4" height="0.9" fill="#666"/><text transform="translate(5.9 69.78) rotate(-90)" font-size="5.8" fill="#444" text-anchor="middle" font-family="Liberation Sans">4</text><rect x="2.6" y="63.97" width="2.4" height="0.9" fill="#666"/><rect x="2.6" y="74.69" width="2.4" height="0.9" fill="#666"/><text transform="translate(5.9 91.22) rotate(-90)" font-size="5.8" fill="#444" text-anchor="middle" font-family="Liberation Sans">6</text><rect x="2.6" y="85.41" width="2.4" height="0.9" fill="#666"/><rect x="2.6" y="96.13" width="2.4" height="0.9" fill="#666"/><text transform="translate(5.9 112.66) rotate(-90)" font-size="5.8" fill="#444" text-anchor="middle" font-family="Liberation Sans">8</text><rect x="2.6" y="106.85" width="2.4" height="0.9" fill="#666"/><rect x="2.6" y="117.57" width="2.4" height="0.9" fill="#666"/><text transform="translate(5.9 134.1) rotate(-90)" font-size="5.8" fill="#444" text-anchor="middle" font-family="Liberation Sans">10</text><rect x="2.6" y="128.29" width="2.4" height="0.9" fill="#666"/><rect x="2.6" y="139.01" width="2.4" height="0.9" fill="#666"/><text transform="translate(5.9 155.54) rotate(-90)" font-size="5.8" fill="#444" text-anchor="middle" font-family="Liberation Sans">12</text><rect x="2.6" y="149.73" width="2.4" height="0.9" fill="#666"/><rect x="2.6" y="160.45" width="2.4" height="0.9" fill="#666"/><text transform="translate(5.9 176.98) rotate(-90)" font-size="5.8" fill="#444" text-anchor="middle" font-family="Liberation Sans">14</text><rect x="2.6" y="171.17" width="2.4" height="0.9" fill="#666"/><rect x="2.6" y="181.89" width="2.4" height="0.9" fill="#666"/><text transform="translate(5.9 198.42) rotate(-90)" font-size="5.8" fill="#444" text-anchor="middle" font-family="Liberation Sans">16</text><rect x="2.6" y="192.61" width="2.4" height="0.9" fill="#666"/><rect x="2.6" y="203.33" width="2.4" height="0.9" fill="#666"/><text transform="translate(5.9 219.86) rotate(-90)" font-size="5.8" fill="#444" text-anchor="middle" font-family="Liberation Sans">18</text><rect x="2.6" y="214.05" width="2.4" height="0.9" fill="#666"/><rect x="2.6" y="224.77" width="2.4" height="0.9" fill="#666"/><text transform="translate(5.9 241.3) rotate(-90)" font-size="5.8" fill="#444" text-anchor="middle" font-family="Liberation Sans">20</text><rect x="2.6" y="235.49" width="2.4" height="0.9" fill="#666"/><rect x="2.6" y="246.21" width="2.4" height="0.9" fill="#666"/><text transform="translate(5.9 262.74) rotate(-90)" font-size="5.8" fill="#444" text-anchor="middle" font-family="Liberation Sans">22</text><rect x="2.6" y="256.93" width="2.4" height="0.9" fill="#666"/><rect x="2.6" y="267.65" width="2.4" height="0.9" fill="#666"/><text transform="translate(5.9 284.18) rotate(-90)" font-size="5.8" fill="#444" text-anchor="middle" font-family="Liberation Sans">24</text><rect x="2.6" y="278.37" width="2.4" height="0.9" fill="#666"/><rect x="2.6" y="289.09" width="2.4" height="0.9" fill="#666"/></svg><div class="r" style="left:85.50px;top:126.50px;width:232.00px;height:300.00px;background:#d9d9d9;"></div><div class="r" style="left:86.00px;top:127.00px;width:231.00px;height:299.00px;background:#fff;"></div><div class="r" style="left:322.50px;top:126.50px;width:232.00px;height:300.00px;background:#d9d9d9;"></div><div class="r" style="left:323.00px;top:127.00px;width:231.00px;height:299.00px;background:#fff;"></div><div class="r" style="left:558.50px;top:126.50px;width:232.00px;height:300.00px;background:#d9d9d9;"></div><div class="r" style="left:559.00px;top:127.00px;width:231.00px;height:299.00px;background:#fff;"></div><svg class="r" style="left:0.00px;top:0.00px" width="800" height="450" viewBox="0 0 800 450"><g fill="none" stroke="#c4c4c4" stroke-width="0.8" transform="translate(0.4 0.4)"><path d="M120 147.1 V153.8 H113.3"/><path d="M283 147.1 V153.8 H289.7"/><path d="M113.3 399.8 H120 V406.5"/><path d="M289.7 399.8 H283 V406.5"/><path d="M357 147.1 V153.8 H350.3"/><path d="M520 147.1 V153.8 H526.7"/><path d="M350.3 399.8 H357 V406.5"/><path d="M526.7 399.8 H520 V406.5"/><path d="M593 147.1 V153.8 H586.3"/><path d="M756 147.1 V153.8 H762.7"/><path d="M586.3 399.8 H593 V406.5"/><path d="M762.7 399.8 H756 V406.5"/></g></svg><div class="r" style="left:119.70px;top:210.70px;width:3.20px;height:188.30px;background:#cbcbcb;"></div><div class="r" style="left:356.00px;top:153.80px;width:3.10px;height:237.50px;background:#cbcbcb;"></div><svg class="r" style="left:309.50px;top:210.00px" width="6" height="5" viewBox="0 0 6 5"><rect x="0.5" y="0.8" width="2" height="3.4" fill="#777"/><path d="M2.5 1.4 H5.2 M2.5 3.4 H5.2 M4.4 0.6 L5.3 1.4 L4.4 2.2" stroke="#777" stroke-width="0.8" fill="none"/></svg><div class="dl" style="left:120.00px;top:154.98px;width:175.59px;">Trong một chuyến du lịch hè năm ngoái, em đã được đến thăm bãi biển Nha Trang -</div><div class="dl" style="left:120.00px;top:161.28px;width:175.59px;">một trong những bãi biển đẹp nhất mà em từng thấy. Cảnh biển nơi đây đã để lại</div><div class="dl" style="left:120.00px;top:167.58px;width:175.59px;text-align-last:left;">trong em nhiều ấn tượng khó quên.</div><div class="dl" style="left:120.00px;top:177.18px;width:175.59px;">Buổi sáng, khi mặt trời vừa tỏ rạng, biển trông thật yên bình và thơ mộng. Ánh nắng</div><div class="dl" style="left:120.00px;top:183.48px;width:175.59px;">đầu tiên chiếu xuống mặt nước long lanh như rắc những hạt vàng nhỏ lấp lánh. Sóng</div><div class="dl" style="left:120.00px;top:189.78px;width:175.59px;">biển nhẹ nhàng vỗ vào bờ, tạo nên âm thanh rì rào như lời thì thầm của mẹ thiên</div><div class="dl" style="left:120.00px;top:196.08px;width:175.59px;">nhiên. Xa xa, vài chiếc thuyền đánh cá đang dập dềnh, như những chấm nhỏ giữa</div><div class="dl" style="left:120.00px;top:202.38px;width:175.59px;text-align-last:left;">lòng đại dương bao la.</div><div class="dl" style="left:593.00px;top:154.58px;width:175.59px;">Bãi cát trắng trải dài, mịn như nhung. Khiến em không thể ngừng đi chân trần để</div><div class="dl" style="left:593.00px;top:160.88px;width:175.59px;">cảm nhận sự mát lạnh của đất trời. Những hàng dừa cao vút nghiêng mình theo gió</div><div class="dl" style="left:593.00px;top:167.18px;width:175.59px;">như đang nhún nhảy chào đón du khách. Trên bãi biển, trẻ em nô đùa, xây lâu đài</div><div class="dl" style="left:593.00px;top:173.48px;width:175.59px;text-align-last:left;">cát, người lớn thì tắm biển hoặc nằm dài tắm nắng.</div><div class="dl" style="left:593.00px;top:183.18px;width:175.59px;">Buổi chiều, mặt trời dần lặn xuống chân trời, nhuộm đỏ cả khoảng không gian rộng</div><div class="dl" style="left:593.00px;top:189.48px;width:175.59px;">lớn. Biển lúc này lại mang vẻ đẹp huyền bí và lãng mạn. Sóng vẫn vỗ đều, gió vẫn thổi</div><div class="dl" style="left:593.00px;top:195.78px;width:175.59px;text-align-last:left;">nhẹ, nhưng lòng người lại thấy yên bình đến lạ.</div><div class="dl" style="left:593.00px;top:205.28px;width:175.59px;">Cảnh biển không chỉ đẹp mà còn khiến em cảm thấy thư giãn, gần gũi với thiên</div><div class="dl" style="left:593.00px;top:211.58px;width:175.59px;text-align-last:left;">nhiên. Em mong rằng sẽ có dịp quay trở lại để tiếp tục tận hưởng vẻ đẹp tuyệt vời ấy.</div><svg class="r" style="left:2.00px;top:414.00px" width="42" height="32" viewBox="0 0 591 450"><path d="M125 65 H360 L338 185 H172 L148 325 H245 L232 395 H85 Q45 395 52 352 L93 100 Q100 65 125 65 Z" fill="#149a7c"/><path d="M385 65 H510 Q552 65 545 108 L503 362 Q497 395 470 395 H235 L255 270 H305 L300 295 H420 L440 185 H375 Z" fill="#0b5a46"/></svg><svg class="r" style="left:0.00px;top:0.00px" width="800" height="450" viewBox="0 0 800 450"><path transform="translate(44.4 428.4)" d="M1.1 0 V7.9 M4.6 0 V7.9 M1.1 3.95 H4.6" fill="none" stroke="#0e4d3d" stroke-width="2.2" stroke-linejoin="round" stroke-linecap="butt"/><path transform="translate(52.2 428.4)" d="M1.1 2.3 Q1.1 1.1 2.3 1.1 H3.9 Q5.1 1.1 5.1 2.3 V5.6 Q5.1 6.8 3.9 6.8 H2.3 Q1.1 6.8 1.1 5.6 Z" fill="none" stroke="#0e4d3d" stroke-width="2.2" stroke-linejoin="round" stroke-linecap="butt"/><path transform="translate(60.1 428.4)" d="M1.1 7.9 L2.15 1.1 H3.95 L5 7.9 M1.7 4.898 H4.4" fill="none" stroke="#0e4d3d" stroke-width="2.2" stroke-linejoin="round" stroke-linecap="butt"/><path transform="translate(68 428.4)" d="M1.1 7.9 V1.1 L5 6.8 V0" fill="none" stroke="#0e4d3d" stroke-width="2.2" stroke-linejoin="round" stroke-linecap="butt"/><path transform="translate(75.9 428.4)" d="M5 2.2 V1.1 H1.1 V6.8 H5 V3.95 H3.05" fill="none" stroke="#0e4d3d" stroke-width="2.2" stroke-linejoin="round" stroke-linecap="butt"/><path transform="translate(82.9 428.4)" d="M1.1 0 V7.9 M4.6 0 V7.9 M1.1 3.95 H4.6" fill="none" stroke="#0e4d3d" stroke-width="2.2" stroke-linejoin="round" stroke-linecap="butt"/><path transform="translate(90.9 428.4)" d="M1.1 7.9 L2.4 1.1 H4.2 L5.5 7.9 M1.7 4.898 H4.9" fill="none" stroke="#0e4d3d" stroke-width="2.2" stroke-linejoin="round" stroke-linecap="butt"/><path transform="translate(99.7 428.4)" d="M1.1 7.9 V1.1 L3.45 4.345 L5.8 1.1 V7.9" fill="none" stroke="#149a7c" stroke-width="2.2" stroke-linejoin="round" stroke-linecap="butt"/><path transform="translate(110 428.4)" d="M1.1 2.3 Q1.1 1.1 2.3 1.1 H3.3 Q4.5 1.1 4.5 2.3 V5.6 Q4.5 6.8 3.3 6.8 H2.3 Q1.1 6.8 1.1 5.6 Z" fill="none" stroke="#149a7c" stroke-width="2.2" stroke-linejoin="round" stroke-linecap="butt"/><path transform="translate(118.1 428.4)" d="M1.1 1.1 V6.8 H3.35 Q4.55 6.8 4.55 5.6 V4.95 Q4.55 3.95 3.75 3.95 Q4.15 3.95 4.15 2.95 V2.3 Q4.15 1.1 2.95 1.1 H1.1 M1.1 3.95 H3.75" fill="none" stroke="#149a7c" stroke-width="2.2" stroke-linejoin="round" stroke-linecap="butt"/><path transform="translate(126 428.4)" d="M0.9 0 V7.9" fill="none" stroke="#149a7c" stroke-width="2.2" stroke-linejoin="round" stroke-linecap="butt"/><path transform="translate(129.7 428.4)" d="M1.1 0 V6.8 H4.05" fill="none" stroke="#149a7c" stroke-width="2.2" stroke-linejoin="round" stroke-linecap="butt"/><path transform="translate(135.3 428.4)" d="M5.4 1.1 H1.1 V6.8 H5.4 M1.1 3.95 H4.8" fill="none" stroke="#149a7c" stroke-width="2.2" stroke-linejoin="round" stroke-linecap="butt"/><rect x="142.9" y="434.5" width="2" height="1.8" fill="#149a7c"/><path transform="translate(146.9 428.4)" d="M5.3 1.1 H1.1 V6.8 H5.3" fill="none" stroke="#149a7c" stroke-width="2.2" stroke-linejoin="round" stroke-linecap="butt"/><path transform="translate(154.2 428.4)" d="M1.1 2.3 Q1.1 1.1 2.3 1.1 H2.7 Q3.9 1.1 3.9 2.3 V5.6 Q3.9 6.8 2.7 6.8 H2.3 Q1.1 6.8 1.1 5.6 Z" fill="none" stroke="#149a7c" stroke-width="2.2" stroke-linejoin="round" stroke-linecap="butt"/><path transform="translate(161.5 428.4)" d="M1.1 7.9 V1.1 L3.9 4.345 L6.7 1.1 V7.9" fill="none" stroke="#149a7c" stroke-width="2.2" stroke-linejoin="round" stroke-linecap="butt"/></svg>
</body></html>
